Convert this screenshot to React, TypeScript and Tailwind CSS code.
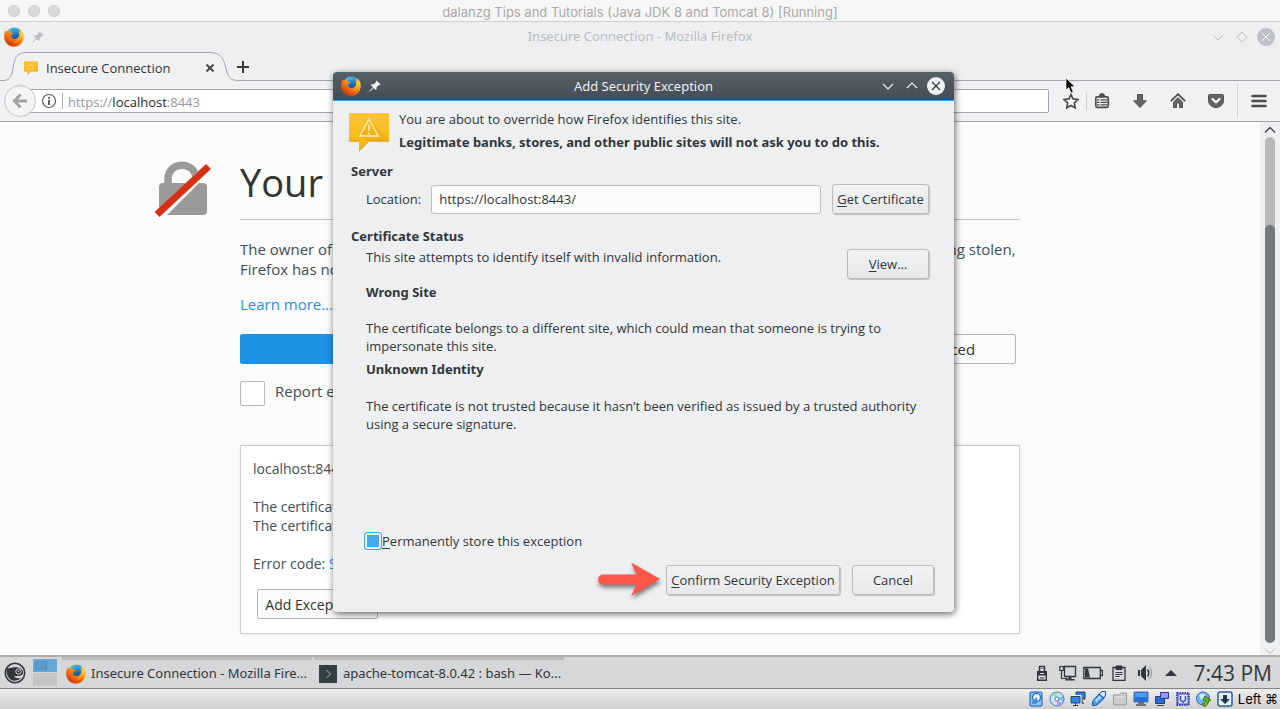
import React from "react";

function FirefoxIcon({ className, id }: { className?: string; id: string }) {
  return (
    <svg viewBox="0 0 20 20" className={className} aria-hidden="true">
      <defs>
        <linearGradient id={id + "g"} x1="0.3" y1="0" x2="0.6" y2="1">
          <stop offset="0" stopColor="#4fc3ee" />
          <stop offset="0.5" stopColor="#1c6fbb" />
          <stop offset="1" stopColor="#0c2f6e" />
        </linearGradient>
        <linearGradient id={id + "f"} x1="1" y1="0.1" x2="0.2" y2="1">
          <stop offset="0" stopColor="#ffe94a" />
          <stop offset="0.4" stopColor="#fba11d" />
          <stop offset="0.75" stopColor="#e8590f" />
          <stop offset="1" stopColor="#c8340f" />
        </linearGradient>
      </defs>
      <circle cx="10.3" cy="8.8" r="8.4" fill={`url(#${id}g)`} />
      <path
        d="M1.6 3.6C2.200 4.300 3 4.400 3.800 4 4.600 3.200 5.600 2.800 6.800 2.900 6.200 3.600 6 4.700 6.100 5.400c.7.2 2 .2 3 .4.4.9-1.600 1.400-2.200 2.200.4 1 .3 1.500.1 2.100 1 1.900 3.400 2.500 5.400 1.600 1.200-.6 1.900-1.200 2.500-2.700.5-2 .1-4.300-1-6.100 1.300.9 2 2 2.300 3.100.2-1.700-.3-3.200-1.300-4.500C18.300 3.400 19.900 6.600 19.800 10c-.2 5.500-4.500 9.800-9.800 9.800S.3 15.600.2 10.300C.1 8 .6 5.600 1.600 3.600Z"
        fill={`url(#${id}f)`}
      />
      <path d="M3 12c1.200 3.800 5 5.400 8.500 4.700 3.200-.6 5.600-3.100 6.200-6.300.3 4.200-2.600 7.800-6.800 8.400C6.900 19.200 3.400 16.300 3 12Z" fill="#c93a0c" opacity=".45" />
    </svg>
  );
}

function PinIcon({ className }: { className?: string }) {
  return (
    <svg viewBox="0 0 12 12" className={className} fill="currentColor" aria-hidden="true">
      <path d="M7.500.4 11.600 4.500 10.600 5.100 9.900 4.900 7.700 7.100 7.600 9.300 6.800 10.100 4.600 7.900 1 11.500.3 11.600.4 10.900 4 7.300 1.800 5.100 2.700 4.300 4.900 4.200 7.100 2 6.900 1.300Z" />
    </svg>
  );
}

function WarningBubble({ className, id }: { className?: string; id: string }) {
  return (
    <svg viewBox="0 0 40 40" className={className} aria-hidden="true">
      <defs>
        <linearGradient id={id} x1="0" y1="0" x2="0" y2="1">
          <stop offset="0" stopColor="#fdc53d" />
          <stop offset="1" stopColor="#f9b504" />
        </linearGradient>
      </defs>
      <path d="M0 1h40v28.500H19.800L10 39.500V29.500H0Z" fill={`url(#${id})`} />
      <path d="m20 7 20 20v2H19l-9-6Z" fill="#dd9b00" opacity=".28" />
      <path d="M0 28.500h10v1H0Zm20 0h20v1H19.500L10 39.500v-1.500Z" fill="#dc9c05" />
      <path d="M20 7.500 29.300 24H10.700Z" fill="none" stroke="#fff0c4" strokeWidth="1.300" />
      <path d="M20 12.500v6.500M20 20.500v2" stroke="#fff0c4" strokeWidth="1.500" />
    </svg>
  );
}

const tool = "flex h-[30px] w-[30px] items-center justify-center text-[#4d4d4d]";

function MacTitle() {
  return (
    <header className="relative flex h-[22px] shrink-0 items-center justify-center border-b border-[#d0d0d1] bg-[#f6f6f6]">
      <div className="absolute left-2 flex gap-2">
        {[0, 1, 2].map((n) => (
          <span key={n} className="h-3 w-3 rounded-full border border-[#cbcbcb] bg-[#dadada]" />
        ))}
      </div>
      <h1 className="pt-[2px] font-['Inter',sans-serif] text-[13px] leading-5 text-[#a9a9a9]">dalanzg Tips and Tutorials (Java JDK 8 and Tomcat 8) [Running]</h1>
    </header>
  );
}

function WindowTitle() {
  return (
    <div className="relative flex h-[30px] shrink-0 items-center justify-center text-[#b9bdc1]">
      <div className="absolute left-1 flex items-center gap-2">
        <FirefoxIcon id="win" className="h-5 w-5" />
        <PinIcon className="h-3 w-3" />
      </div>
      <h2 className="font-['Noto_Sans',sans-serif] text-[13px]">Insecure Connection - Mozilla Firefox</h2>
      <div className="absolute right-[5px] flex items-center">
        <button aria-label="Minimize">
          <svg width="12" height="12" fill="none" stroke="currentColor"><path d="m1 4 5 5 5-5" /></svg>
        </button>
        <button aria-label="Restore" className="ml-3">
          <svg width="12" height="12" fill="none" stroke="currentColor"><path d="m6 1 5 5-5 5-5-5Z" /></svg>
        </button>
        <button aria-label="Close" className="ml-[9px] flex h-[18px] w-[18px] items-center justify-center rounded-full bg-[#bcc1c5] text-white">
          <svg width="10" height="10" fill="none" stroke="currentColor"><path d="m1 1 8 8M9 1 1 9" /></svg>
        </button>
      </div>
    </div>
  );
}

function TabBar() {
  return (
    <div className="flex h-[29px] shrink-0">
      <div className="relative flex w-[238px] items-center pt-[2px] pl-6">
        <svg viewBox="0 0 238 29" className="absolute inset-0 h-full w-full" fill="#f0f1f3" stroke="#a2a5ac" aria-hidden="true">
          <path d="M-2 28.500H3C9 28.500 11 25 12.500 19L14 11C15.500 4 19 .5 27 .5H209C218 .5 222 4 224 9.500L227 20C229 26 231 28.500 239 28.500" />
        </svg>
        <WarningBubble id="tabw" className="relative h-[14px] w-[14px]" />
        <span className="relative ml-2 text-[13px] leading-5 text-[#31363b]">Insecure Connection</span>
        <button aria-label="Close tab" className="relative mr-[24px] ml-auto">
          <svg width="8" height="8" stroke="#4a4a4a" strokeWidth="2"><path d="m.5.5 7 7M7.500.5l-7 7" /></svg>
        </button>
      </div>
      <div className="flex flex-1 items-center border-b border-[#a2a5ac] pt-[2px]">
        <button aria-label="New tab" className="-ml-px">
          <svg width="12" height="12" stroke="#3c3c3c" strokeWidth="2"><path d="M6 0v12M0 6h12" /></svg>
        </button>
      </div>
    </div>
  );
}

function NavBar() {
  return (
    <nav className="flex h-[41px] shrink-0 items-center border-b border-[#a2a5ac] bg-[#f0f1f3] pr-[6px] pl-1">
      <button aria-label="Back" className="z-10 flex h-8 w-8 shrink-0 items-center justify-center rounded-full border border-[#c2c4c7] bg-[#f3f4f5]">
        <svg width="16" height="16" fill="none" stroke="#a3a3a3" strokeWidth="3"><path d="M8.500 1.500 2.500 8l6 6.500M3 8h12" /></svg>
      </button>
      <div className="-ml-4 flex h-6 flex-1 items-center rounded-[2px] border border-[#a2a5ac] bg-white pl-5">
        <svg width="16" height="16" fill="none" stroke="#5e5e5e" aria-hidden="true">
          <circle cx="8" cy="8" r="6.500" strokeWidth="1.200" />
          <path d="M8 7v5M8 4v1.800" strokeWidth="2" />
        </svg>
        <span className="mr-[5px] ml-[5px] h-4 w-px bg-[#aeb0b3]" />
        <span className="pt-[2px] text-[13px] leading-5 text-[#949698]">
          https://<span className="text-[#24292d]">localhost</span>:8443
        </span>
      </div>
      <div className="ml-[7px] flex items-center">
        <button aria-label="Bookmark this page" className={tool}>
          <svg width="16" height="16" fill="#f6f6f6" stroke="currentColor" strokeWidth="1.700"><path d="m8 1.500 2 4.400 4.900.6-3.600 3.400.9 4.900L8 12.400l-4.200 2.400.9-4.900L1.100 6.500 6 5.900Z" /></svg>
        </button>
        <span className="h-[18px] w-px bg-[#c9cbcd]" />
        <button aria-label="Bookmarks menu" className={tool}>
          <svg width="16" height="16" fill="none" stroke="currentColor"><rect x="1.800" y="3.800" width="12.500" height="10.500" rx="1.500" strokeWidth="1.700" /><path d="M5 3.500 6.500.8h3L11 3.500Z" fill="currentColor" /><path d="M3 6.800h2.500m1 0h7M3 9.300h2.500m1 0h7M3 11.800h2.500m1 0h7" strokeWidth="1.300" /></svg>
        </button>
      </div>
      <div className="ml-2 flex items-center gap-2">
        <button aria-label="Downloads" className={tool}>
          <svg width="16" height="16" fill="#676767" stroke="currentColor"><path d="M5.500 1.500h5v6.300h3.800L8 14.500 1.700 7.800h3.800Z" /></svg>
        </button>
        <button aria-label="Home" className={tool}>
          <svg width="16" height="16" fill="none" stroke="currentColor"><path d="m.8 8.200 7.200-7 7.200 7" strokeWidth="1.800" /><path d="M3.500 9 8 4.700 12.500 9v5.500h-3V10h-3v4.500h-3Z" fill="#676767" /></svg>
        </button>
        <button aria-label="Save to Pocket" className={tool}>
          <svg width="16" height="16" fill="none"><path d="M1.500 1.500h13c.5 0 1 .5 1 1v5c0 4-3.500 7-7.500 7s-7.500-3-7.500-7v-5c0-.5.5-1 1-1Z" fill="#656565" stroke="#4d4d4d" /><path d="m4.500 6 3.500 3.300L11.500 6" stroke="white" strokeWidth="2" strokeLinecap="round" /></svg>
        </button>
      </div>
      <span className="mx-[6px] h-[34px] w-px bg-[#d2d3d5]" />
      <button aria-label="Open menu" className={tool}>
        <svg width="16" height="16" stroke="currentColor" strokeWidth="2.600" strokeLinecap="round"><path d="M1.500 3h13M1.500 8h13M1.500 13h13" /></svg>
      </button>
    </nav>
  );
}

function ErrorPage() {
  return (
    <div className="flex min-h-0 flex-1 bg-[#fbfbfb]">
      <main className="flex flex-1 items-start justify-center pr-[85px]">
        <svg width="58" height="56" className="mt-[39px] mr-[27px] shrink-0" aria-hidden="true">
          <path d="M13 24V18C13 8 21 4.300 27 4.300S41 8 41 18v6" fill="none" stroke="#9a9a9a" strokeWidth="7.500" />
          <rect x="4" y="22" width="48" height="32" rx="4" fill="#9a9a9a" />
          <path d="M-2 53 53 1l6 6L6 60Z" fill="#fbfbfb" />
          <path d="M2 53.500 53.500 5.500" stroke="#d73015" strokeWidth="7" />
        </svg>
        <div className="w-full max-w-[780px]">
          <h1 className="mt-9 border-b border-[#c1c1c1] pb-3 text-[38px] leading-[49px] text-[#333]">Your connection is not secure</h1>
          <p className="mt-[19px] text-[15px] leading-5 text-[#424e5a]">
            The owner of localhost has configured their website improperly. To protect your information from being stolen, Firefox has not connected to this website.
          </p>
          <p className="mt-[15px] text-[15px] leading-5">
            <a href="#learn" className="text-[#1f93e4]">Learn more…</a>
          </p>
          <div className="mt-5 mr-1 flex justify-between">
            <button className="h-[30px] w-[300px] rounded-[2px] bg-[#1f93e4] text-[15px] text-white">Go Back</button>
            <button className="h-[30px] w-[150px] rounded-[2px] border border-[#b5b5b5] bg-[#fbfbfb] text-[15px] text-[#333]">Advanced</button>
          </div>
          <label className="mt-[17px] flex h-[25px] gap-[10px] text-[15px] leading-5 text-[#424e5a]">
            <input type="checkbox" className="h-[25px] w-[25px] appearance-none rounded-[2px] border border-[#b8b8b8] bg-white" />
            Report errors like this to help Mozilla identify and block malicious sites
          </label>
          <section className="mt-[39px] border border-[#cecece] bg-white px-3 pt-[13px] pb-[14px] text-[14px] leading-[19px] text-[#424e5a] shadow-[0_0_4px_rgba(0,0,0,0.08)]">
            <p>localhost:8443 uses an invalid security certificate.</p>
            <p className="mt-[19px]">The certificate is not trusted because it is self-signed.</p>
            <p>The certificate is not valid for the name localhost.</p>
            <p className="mt-[19px]">
              Error code: <a href="#code" className="text-[#1f93e4]">SEC_ERROR_UNKNOWN_ISSUER</a>
            </p>
            <button className="mt-4 ml-1 h-[30px] w-[121px] rounded-[2px] border border-[#b5b5b5] bg-[#fbfbfb] text-[#333]">Add Exception…</button>
          </section>
        </div>
      </main>
      <div className="flex w-5 shrink-0 flex-col items-center bg-[#eff0f2] pt-1">
        <svg width="12" height="8" fill="none" stroke="#31363b" aria-hidden="true"><path d="m1 6.500 5-5 5 5" strokeWidth="1.200" /></svg>
        <div className="mt-[3px] flex w-[10px] flex-1 flex-col rounded-full bg-[#b7b8b9]">
          <div className="mt-[88px] flex-1 rounded-full bg-[#75797c]" />
        </div>
        <svg width="12" height="8" className="mt-1" fill="none" stroke="#b5b8ba" aria-hidden="true"><path d="m1 1.500 5 5 5-5" /></svg>
      </div>
    </div>
  );
}

const kdeButton =
  "h-[30px] rounded-[3px] border border-[#b9bbbd] bg-linear-to-b from-[#f1f2f3] to-[#e7e8ea] text-[13px] text-[#31363b] shadow-[1px_1px_1px_rgba(0,0,0,0.2)]";

function ExceptionDialog() {
  return (
    <div
      role="dialog"
      aria-labelledby="dialog-title"
      className="absolute top-[72px] left-[333px] z-20 flex h-[540px] w-[621px] flex-col rounded-[4px] bg-[#eeeff1] text-[13px] leading-[18px] text-[#31363b] shadow-[1px_2px_7px_rgba(0,0,0,0.6)]"
    >
      <div className="relative flex h-[29px] shrink-0 items-center justify-center rounded-t-[4px] border-b border-[#479fdb] bg-linear-to-b from-[#566068] to-[#454c55] text-[#eff0f1]">
        <div className="absolute left-2 flex items-center gap-2">
          <FirefoxIcon id="dlg" className="h-5 w-5" />
          <PinIcon className="h-3 w-3" />
        </div>
        <h2 id="dialog-title" className="font-['Noto_Sans',sans-serif]">Add Security Exception</h2>
        <div className="absolute right-[9px] flex items-center">
          <button aria-label="Minimize dialog">
            <svg width="12" height="12" fill="none" stroke="currentColor" strokeWidth="1.200"><path d="m1 4 5 5 5-5" /></svg>
          </button>
          <button aria-label="Maximize dialog" className="ml-3">
            <svg width="12" height="12" fill="none" stroke="currentColor" strokeWidth="1.200"><path d="m1 8 5-5 5 5" /></svg>
          </button>
          <button aria-label="Close dialog" className="ml-[9px] flex h-[18px] w-[18px] items-center justify-center rounded-full bg-[#eff0f1] text-[#31363b]">
            <svg width="10" height="10" fill="none" stroke="currentColor" strokeWidth="1.200"><path d="m1 1 8 8M9 1 1 9" /></svg>
          </button>
        </div>
      </div>
      <div className="flex flex-1 flex-col pt-[9px] pr-5 pb-[14px] pl-[18px]">
        <div className="flex">
          <WarningBubble id="dlgw" className="mt-[2px] mr-[10px] -ml-[2px] h-10 w-10" />
          <div>
            <p>You are about to override how Firefox identifies this site.</p>
            <p className="mt-[5px] font-['Noto_Sans',sans-serif] font-bold">Legitimate banks, stores, and other public sites will not ask you to do this.</p>
          </div>
        </div>
        <h3 className="mt-[10px] font-['Noto_Sans',sans-serif] font-bold">Server</h3>
        <div className="mt-1 mr-[5px] ml-[15px] flex items-center">
          <label htmlFor="location">Location:</label>
          <input id="location" type="text" defaultValue="https://localhost:8443/" className="ml-[10px] h-[29px] min-w-0 flex-1 rounded-[3px] border border-[#bcbec0] bg-[#fcfcfc] px-[7px]" />
          <button className={kdeButton + " ml-[11px] w-[97px]"}>
            <u className="underline-offset-2">G</u>et Certificate
          </button>
        </div>
        <h3 className="mt-[13px] font-['Noto_Sans',sans-serif] font-bold">Certificate Status</h3>
        <div className="mt-[3px] mr-[5px] ml-[15px] flex justify-between">
          <p>This site attempts to identify itself with invalid information.</p>
          <button className={kdeButton + " mt-px w-[82px]"}>
            <u className="underline-offset-2">V</u>iew…
          </button>
        </div>
        <div className="mt-1 ml-[15px]">
          <h4 className="font-['Noto_Sans',sans-serif] font-bold">Wrong Site</h4>
          <p className="mt-[18px]">The certificate belongs to a different site, which could mean that someone is trying to impersonate this site.</p>
          <h4 className="mt-[5px] font-['Noto_Sans',sans-serif] font-bold">Unknown Identity</h4>
          <p className="mt-[19px]">The certificate is not trusted because it hasn’t been verified as issued by a trusted authority using a secure signature.</p>
        </div>
        <label className="mt-auto ml-[13px] flex h-[18px] items-center self-start">
          <input
            type="checkbox"
            defaultChecked
            className="h-[18px] w-[18px] appearance-none rounded-[3px] border border-[#3daee9] bg-[#eff0f1] checked:bg-[#46aaf0] checked:shadow-[inset_0_0_0_2px_#eff0f1]"
          />
          <span>
            <u className="underline-offset-2">P</u>ermanently store this exception
          </span>
        </label>
        <div className="mt-3 flex h-9 items-center justify-end">
          <svg width="66" height="40" className="mr-[2px] shrink-0 drop-shadow-[1px_3px_2px_rgba(0,0,0,0.5)]" aria-hidden="true">
            <path d="M5 14.500H38.500L33 2.500 62 19 33 36 38.500 24.500H5A5 5 0 0 1 5 14.500Z" fill="#fe5748" />
          </svg>
          <button className={kdeButton + " w-[174px]"}>
            <u className="underline-offset-2">C</u>onfirm Security Exception
          </button>
          <button className={kdeButton + " ml-3 w-[82px]"}>Cancel</button>
        </div>
      </div>
    </div>
  );
}

function Taskbar() {
  return (
    <footer className="flex h-[34px] shrink-0 items-center border-t-2 border-b border-t-[#aaacad] border-b-[#858585] bg-[#d5d7d8] font-['Noto_Sans',sans-serif] text-[#31363b]">
      <button aria-label="Application launcher" className="ml-1">
        <svg width="22" height="22" fill="none" stroke="#31363b">
          <circle cx="11" cy="11" r="9.700" strokeWidth="1.600" />
          <path d="M2.500 7C7 5.500 11 5 14 5.600c2.500.6 4.500 2 5 4 .5 2.500-1.500 4.400-4 4.400-2 0-4-.5-5 .5 1.500 1.500 4 2 7 1.500-3 3-7.500 3.500-10.500 1.500C3.500 15 2 11 2.500 7Z" fill="#31363b" stroke="none" />
          <circle cx="14.500" cy="9.500" r="2.700" stroke="#d5d7d8" />
          <circle cx="14.500" cy="9.500" r=".8" fill="#d5d7d8" stroke="none" />
        </svg>
      </button>
      <div className="ml-[7px] flex w-6 flex-col gap-px">
        <button aria-label="Desktop 1" className="h-[13px] bg-[#69a8d6] p-[2px]">
          <span className="block h-[9px] w-3 border border-[#4d8fc0] bg-[#5b9aca]" />
        </button>
        <button aria-label="Desktop 2" className="h-[13px] bg-[#c3c4c5]" />
      </div>
      <button className="ml-[5px] flex h-full w-[250px] items-center pt-[3px] shadow-[inset_0_3px_0_#bcbdbe]">
        <FirefoxIcon id="task" className="ml-1 h-5 w-5" />
        <span className="ml-[5px] text-[13px]">Insecure Connection - Mozilla Fire...</span>
      </button>
      <button className="ml-[2px] flex h-full w-[250px] items-center pt-[3px] shadow-[inset_0_3px_0_#bcbdbe]">
        <svg width="18" height="18" className="ml-[5px]" aria-hidden="true">
          <rect width="18" height="18" fill="#334043" />
          <path d="m7.500 5 4 4-4 4" fill="none" stroke="#aeb8b9" />
        </svg>
        <span className="ml-[6px] text-[13px]">apache-tomcat-8.0.42 : bash — Ko...</span>
      </button>
      <div className="ml-auto flex items-center pr-2">
        <svg width="12" height="16" fill="none" stroke="#31363b" aria-label="Removable devices"><path d="M3.500 6V1.500h5V6" strokeWidth="1.400" /><path d="M1.700 6.600h8.600v8.700H1.700Z" strokeWidth="1.400" /><path d="M2 7h8v3.500H2Z" fill="#31363b" stroke="none" /><path d="M4 13h4M5 3.500h.8M6.800 3.500h.8" /><path d="M4 8.500h4" stroke="#d5d7d8" /></svg>
        <svg width="18" height="16" className="ml-[11px]" fill="none" stroke="#31363b" aria-label="Network"><path d="M5.500 1.500h11v10h-11Z" strokeWidth="1.300" /><path d="M9.500 12h3v2h3v1.500h-9V14h3Z" fill="#31363b" stroke="none" /><path d="M.8 1.500h3.500v4H.8ZM2.500 6v7.500h6" strokeWidth="1.200" /></svg>
        <svg width="20" height="14" className="ml-[6px]" fill="none" stroke="#31363b" aria-label="Battery"><path d="M.8 1.500h16.500v11H.8Zm17 3h1.700v5h-1.700" strokeWidth="1.300" /><path d="M2 2.500h3l2 9H2Z" fill="#31363b" stroke="none" /></svg>
        <svg width="14" height="16" className="ml-[9px]" fill="none" stroke="#31363b" aria-label="Clipboard"><path d="M1 2.500h12v12.800H1Z" strokeWidth="1.300" /><path d="M4 1h6v3.500H4Z" fill="#31363b" /><path d="M3.500 7.500h7M3.500 9.500h7M3.500 11.500h4" /></svg>
        <svg width="18" height="18" className="ml-[10px]" fill="none" stroke="#31363b" aria-label="Volume"><path d="M2 6h2v6H2ZM5 6l5-5v16l-5-5Z" fill="#31363b" stroke="none" /><path d="M11.500 5.500c1.500 2 1.500 5 0 7" strokeWidth="1.500" /><path d="M13 2.500c3.500 3.500 3.500 9.500 0 13" stroke="#999" /></svg>
        <button aria-label="Show hidden icons" className="ml-[11px]"><svg width="12" height="6" fill="#31363b"><path d="M0 6 6 0l6 6Z" /></svg></button>
        <time className="ml-4 font-['Open_Sans',sans-serif] text-[21px] leading-[28px]">7:43 PM</time>
      </div>
    </footer>
  );
}

function StatusBar() {
  const s = "h-4 w-4";
  return (
    <div className="flex h-5 shrink-0 items-center justify-end gap-[5px] bg-linear-to-b from-[#efefef] to-[#cfcfcf] pr-[2px]">
      <svg viewBox="0 0 16 16" className={s} aria-hidden="true"><rect x="2" y="1" width="12" height="14" rx="1" fill="#8cc4f5" stroke="#1258ae" /><circle cx="8.500" cy="6.500" r="4" fill="#eef8ff" stroke="#1b62bb" strokeWidth="1.200" /><path d="M8.500 6.500 4.500 12H8l1-3.500" fill="#6bb1ec" stroke="#1b62bb" /></svg>
      <svg viewBox="0 0 16 16" className={s} aria-hidden="true"><circle cx="8" cy="8" r="7" fill="#c7e1f8" stroke="#4779ad" /><path d="M8 8 3 3.500A7 7 0 0 1 8 1.500Z" fill="#8ce6b1" /><path d="m8 8 5 4.500a7 7 0 0 1-5 2Z" fill="#c995ea" /><path d="m8 8 6-3v5Z" fill="#75b8fa" /><circle cx="8" cy="8" r="2" fill="white" stroke="#4779ad" /></svg>
      <svg viewBox="0 0 16 16" className={s} aria-hidden="true"><path d="M6 1h9v7H6Z" fill="#2f7fe6" stroke="#29425f" /><path d="M12 9v2M10 12h4" stroke="#555" strokeWidth="1.500" /><path d="M1 5.500h9v6.500H1Z" fill="#5ba7f5" stroke="#eee" strokeWidth="3" /><path d="M1 5.500h9v6.500H1Z" fill="#3384e8" stroke="#29425f" /><path d="M3 14.500h5M5.500 12v2" stroke="#333" /></svg>
      <svg viewBox="0 0 16 16" className={s} aria-hidden="true"><path d="M1.500 14.500C.5 11 3 8 8 3l5 4c-4 5-7 8-11.500 7.500Z" fill="#4c9cf0" stroke="#1656ab" /><path d="m8 3 3-2.500h3.500V4L13 7Z" fill="#d8ecff" stroke="#1656ab" /><path d="M4 9.500 8.500 5l2 1.500L5 11Z" fill="#c1e0ff" /></svg>
      <svg viewBox="0 0 16 16" className={s} aria-hidden="true"><path d="M1.500 14V4H7l2-2h5.500v12Z" fill="#c9c9c9" stroke="#9b9b9b" /><path d="M2 6h12" stroke="#e7e7e7" /></svg>
      <svg viewBox="0 0 16 16" className={s} aria-hidden="true"><path d="M1 1h14v10H1Z" fill="#1f72e2" stroke="#52779e" /><path d="M2 2h12v4H2Z" fill="#4c9bf5" /><path d="M3 14h10M5 12h6" stroke="#555" strokeWidth="1.500" /></svg>
      <svg viewBox="0 0 16 16" className={s} aria-hidden="true"><path d="M1.500 5.500h9v7h-9Z" fill="#2c6bd4" stroke="#253e70" /><path d="M6.500 1.500h8v6h-8Z" fill="#8e96ee" stroke="#303da9" /><path d="M3 14.500h7" stroke="#444" /></svg>
      <svg viewBox="0 0 16 16" className={s} aria-hidden="true"><rect x="2" y="2" width="12" height="12" fill="#a6b4f3" stroke="#4150bb" strokeWidth="2" strokeDasharray="1.500 1" /><rect x="3" y="3" width="10" height="10" fill="#dfe5ff" stroke="#4150bb" /><path d="M5.500 5v4l2.500 2 2.500-2V5" fill="none" stroke="#3949b5" strokeWidth="1.500" /></svg>
      <svg viewBox="0 0 16 16" className={s} aria-hidden="true"><circle cx="7" cy="7.500" r="6.500" fill="#73b3ee" stroke="#326397" /><path d="m3 4 5-2 1 4-4 3Z" fill="#d3edff" /><path d="m9 5 6 4.500-2.500.5c0 2.500-1.500 4.500-4.500 5.500l-1.500-3c2-.5 3-1.500 3-3L7 9Z" fill="#6ab723" stroke="#34700d" /></svg>
      <svg viewBox="0 0 16 16" className={s} aria-hidden="true"><rect x="1" y="1" width="14" height="14" rx="2" fill="#e4eff8" stroke="#316397" strokeWidth="1.500" /><path d="M6 4h4v4h3l-5 5-5-5h3Z" fill="#25384a" /></svg>
      <span className="font-['Inter','DejaVu_Sans',sans-serif] text-[13px] leading-4 text-black">Left ⌘</span>
    </div>
  );
}

export default function App() {
  return (
    <div className="relative flex min-h-screen flex-col overflow-hidden bg-[#eeeff1] font-['Open_Sans',sans-serif]">
      <MacTitle />
      <WindowTitle />
      <TabBar />
      <NavBar />
      <ErrorPage />
      <Taskbar />
      <StatusBar />
      <ExceptionDialog />
      <svg width="12" height="18" className="absolute top-[77px] left-[1065px] z-30" aria-hidden="true">
        <path d="M1 1v12l2.700-2.500L6 16l2.300-1L6 9.700h4Z" fill="black" stroke="white" strokeWidth=".7" />
      </svg>
    </div>
  );
}
